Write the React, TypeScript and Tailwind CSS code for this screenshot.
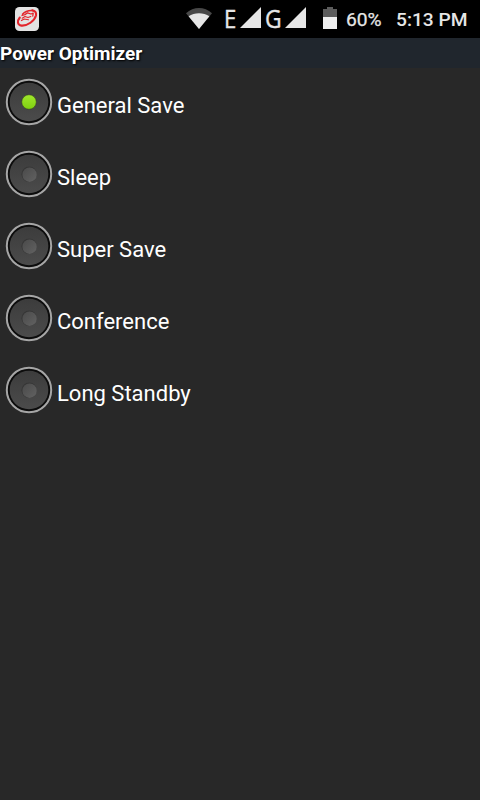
import React from 'react';

interface Mode {
  id: string;
  label: string;
}

const modes: Mode[] = [
  { id: 'general', label: 'General Save' },
  { id: 'sleep', label: 'Sleep' },
  { id: 'super', label: 'Super Save' },
  { id: 'conference', label: 'Conference' },
  { id: 'standby', label: 'Long Standby' },
];

const AppBadge: React.FC = () => (
  <svg width="25" height="24" viewBox="0 0 25 24" className="block">
    <rect x="1" y="0" width="24" height="24" rx="4.5" fill="#e2e2e2" />
    <g fill="none" stroke="#e3242b" strokeLinecap="round" strokeLinejoin="round">
      <path d="M5.8 10.5C3 14 3.2 18 7.5 18.6C13.5 19 20.5 14 22 8.5C22.6 5.5 21 3.8 18.3 3.4" strokeWidth="2.1" />
      <path d="M8.5 7.2C10.5 4.8 14 3.2 18.3 3.4" strokeWidth="1.5" />
      <path d="M8 8.5L11 7.6L13.5 5.8L17 7L19.2 6.2L18.8 9" strokeWidth="1.3" />
      <path d="M8.2 11.2L11 9.6L14 10.6L16.8 9.4" strokeWidth="1.1" />
      <path d="M7.4 13.6L10.2 12L14.5 12.8" strokeWidth="1.1" />
    </g>
  </svg>
);

const WifiIcon: React.FC = () => (
  <svg width="26" height="21" viewBox="0 0 26 21" className="block">
    <path d="M0 5.2C7.5-1.7 18.5-1.7 26 5.2L13 21Z" fill="#484848" />
    <path d="M2.6 8.3C8.5 4.3 17.5 4.3 23.4 8.3L13 21Z" fill="#e6e6e6" />
  </svg>
);

const SignalIcon: React.FC = () => (
  <svg width="21" height="21" viewBox="0 0 21 21" className="block">
    <path d="M21 0V21H0Z" fill="#e6e6e6" />
  </svg>
);

const BatteryIcon: React.FC = () => (
  <svg width="14" height="22" viewBox="0 0 14 22" className="block">
    <path d="M4 0H10V2H14V10H0V2H4Z" fill="#5c5c5c" />
    <rect y="10" width="14" height="12" fill="#efefef" />
  </svg>
);

const StatusBar: React.FC = () => (
  <div className="flex h-[38px] items-start bg-black pt-[7px] pl-[14px] text-[#e6e6e6]">
    <AppBadge />
    <div className="ml-[147px] pt-px">
      <WifiIcon />
    </div>
    <span className="-mt-px ml-[12px] w-4 origin-left scale-x-85 font-['Open_Sans'] text-[26px] leading-6 [-webkit-text-stroke:0.4px_#e6e6e6]">
      E
    </span>
    <SignalIcon />
    <span className="-mt-px ml-1 w-5 origin-left scale-x-88 font-['Open_Sans'] text-[26px] leading-6 [-webkit-text-stroke:0.4px_#e6e6e6]">
      G
    </span>
    <SignalIcon />
    <div className="ml-[17px]">
      <BatteryIcon />
    </div>
    <span className="ml-[9px] w-[50px] pt-px text-[19.2px] leading-6 [-webkit-text-stroke:0.25px_#e6e6e6]">60%</span>
    <span className="pt-px text-[19.2px] font-medium leading-6 whitespace-nowrap">5:13 PM</span>
  </div>
);

const Radio: React.FC<{ checked: boolean }> = ({ checked }) => (
  <svg width="48" height="48" viewBox="0 0 48 48" className="block">
    <defs>
      <linearGradient id="face" x1="0" y1="0" x2="0" y2="1">
        <stop offset="0" stopColor="#3c3c3c" />
        <stop offset="1" stopColor="#4b4b4b" />
      </linearGradient>
      <linearGradient id="lit" x1="0" y1="0" x2="0" y2="1">
        <stop offset="0" stopColor="#a0e62c" />
        <stop offset="1" stopColor="#7fd010" />
      </linearGradient>
      <linearGradient id="unlit" x1="0" y1="0" x2="1" y2="1">
        <stop offset="0" stopColor="#4a4a4a" />
        <stop offset="1" stopColor="#626262" />
      </linearGradient>
    </defs>
    <circle cx="24" cy="24" r="22.2" fill="#0c0c0c" stroke="#a6a6a6" strokeWidth="2" />
    <circle cx="24" cy="24" r="19.3" fill="url(#face)" />
    {checked ? (
      <circle cx="24" cy="24" r="7.3" fill="url(#lit)" stroke="#33401f" strokeWidth="0.6" />
    ) : (
      <>
        <circle cx="24.2" cy="24.2" r="7.7" fill="#363636" />
        <circle cx="24.6" cy="24.7" r="7.2" fill="url(#unlit)" />
      </>
    )}
  </svg>
);

const App: React.FC = () => {
  const [selected, setSelected] = React.useState('general');

  return (
    <div className="flex h-[800px] w-[480px] flex-col overflow-hidden bg-[#282828] font-[Roboto,sans-serif]">
      <StatusBar />
      <h1 className="h-[30px] bg-[#20262d] pt-px text-[19px] leading-[29px] font-bold text-white [text-shadow:1px_1px_2px_#000]">
        Power Optimizer
      </h1>
      <div role="radiogroup">
        {modes.map((mode) => (
          <button
            key={mode.id}
            role="radio"
            aria-checked={selected === mode.id}
            onClick={() => setSelected(mode.id)}
            className="flex h-[72px] w-full items-start pt-[10px] pl-[5px] text-left"
          >
            <Radio checked={selected === mode.id} />
            <span className="ml-1 pt-[13px] text-[22px] leading-[30px] text-white">{mode.label}</span>
          </button>
        ))}
      </div>
    </div>
  );
};

export default App;
